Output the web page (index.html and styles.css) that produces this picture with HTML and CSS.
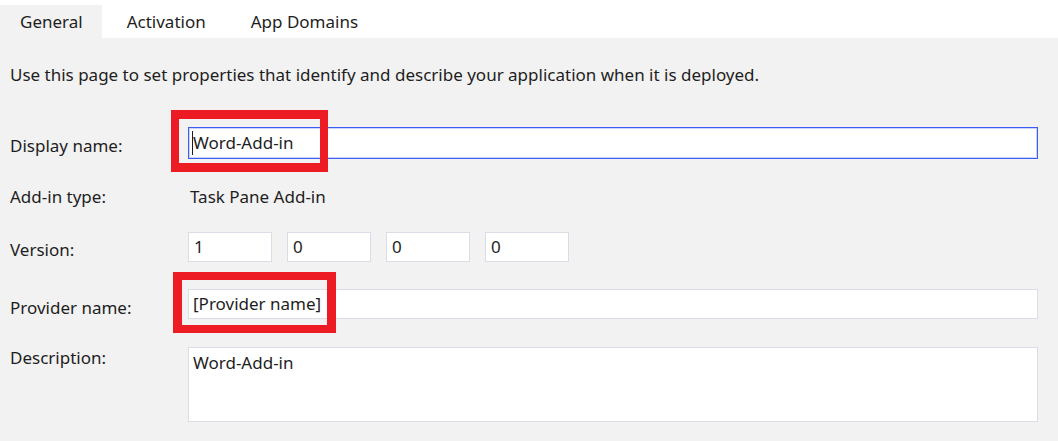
FILE: index.html
```html
<!DOCTYPE html>
<html>
<head>
<meta charset="utf-8">
<link rel="stylesheet" href="styles.css">
</head>
<body>
<div class="tabbar">
  <div class="tab active">General</div>
  <div class="tab">Activation</div>
  <div class="tab">App Domains</div>
</div>
<p class="intro">Use this page to set properties that identify and describe your application when it is deployed.</p>
<div class="form">
  <div class="row r1">
    <div class="label lp8">Display name:</div>
    <div class="field wide focused"><span class="caret"></span>Word-Add-in</div>
  </div>
  <div class="row r2">
    <div class="label lp5">Add-in type:</div>
    <div class="value">Task Pane Add-in</div>
  </div>
  <div class="row r3">
    <div class="label lp7">Version:</div>
    <div class="versions">
      <div class="field small">1</div>
      <div class="field small">0</div>
      <div class="field small">0</div>
      <div class="field small">0</div>
    </div>
  </div>
  <div class="row r4">
    <div class="label lp8">Provider name:</div>
    <div class="field wide">[Provider name]</div>
  </div>
  <div class="row r5">
    <div class="label">Description:</div>
    <div class="field wide area">Word-Add-in</div>
  </div>
</div>
<div class="mark m1"></div>
<div class="mark m2"></div>
</body>
</html>
```
FILE: styles.css
```css
html, body {
  margin: 0;
  padding: 0;
}
body {
  background: #f2f2f2;
  color: #1e1e1e;
  font-family: "Noto Sans", "Open Sans", sans-serif;
  font-size: 17px;
  line-height: 22px;
  width: 1058px;
  height: 441px;
  overflow: hidden;
  position: relative;
}
.tabbar {
  background: #ffffff;
  height: 33px;
  padding-top: 5px;
  display: flex;
  gap: 5px;
}
.tab {
  padding: 0 20px;
  display: flex;
  align-items: center;
  height: 33px;
}
.tab.active {
  background: #f2f2f2;
  padding-right: 19px;
}
.intro {
  margin: 0;
  padding: 26px 10px 0;
}
.form {
  padding: 41px 0 0 10px;
}
.row {
  display: flex;
  align-items: flex-start;
}
.r1 { height: 32px; }
.r2 { height: 32px; margin-top: 22px; }
.r3 { height: 30px; margin-top: 19px; }
.r4 { height: 30px; margin-top: 27px; }
.r5 { height: 75px; margin-top: 28px; }
.label {
  width: 178px;
  flex: none;
}
.lp8 { padding-top: 8px; }
.lp7 { padding-top: 7px; }
.lp5 { padding-top: 5px; }
.value {
  padding: 5px 0 0 2px;
}
.field {
  background: #ffffff;
  border: 1px solid #dadce6;
  box-sizing: border-box;
  display: flex;
  align-items: center;
  padding: 0 4px;
  height: 100%;
}
.wide {
  width: 850px;
}
.focused {
  border-color: #3d5ef2;
  box-shadow: inset 0 0 0 1px #c9d3fb;
  padding-left: 3px;
}
.caret {
  display: inline-block;
  width: 1px;
  height: 24px;
  background: #1e1e1e;
}
.area {
  align-items: flex-start;
  padding-top: 4px;
}
.versions {
  display: flex;
  gap: 15px;
  height: 100%;
}
.small {
  width: 84px;
  padding-left: 5px;
}
.mark {
  position: absolute;
  border: 8px solid #ed1c24;
  box-sizing: border-box;
}
.m1 {
  left: 171px;
  top: 110px;
  width: 157px;
  height: 62px;
  border-top-width: 9px;
  border-bottom-width: 9px;
}
.m2 {
  left: 173px;
  top: 272px;
  width: 163px;
  height: 61px;
  border-width: 8px 9px;
}
```
